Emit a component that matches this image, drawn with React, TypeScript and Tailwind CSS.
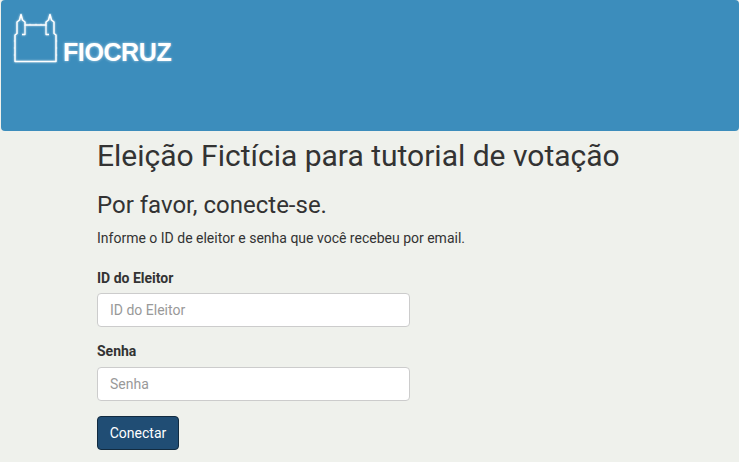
function FiocruzLogo() {
  return (
    <svg width="46" height="52" viewBox="0 0 46 52" fill="none" className="block">
      <g stroke="#fff" strokeLinejoin="round" className="[filter:drop-shadow(0_0_1px_rgba(255,255,255,0.7))]">
        <path
          d="M3 48.5V22L5 20.5V9L7.5 7L9 1.5L10.5 7L13 9V12H34V9L36.5 7L38 1.5L39.5 7L42 9V20.5L44 22V48.5Z"
          strokeWidth="1.5"
        />
        <path d="M13 12V21.5H10M34 12V21.5H37" strokeWidth="1.3" />
        <path d="M3 28H1.8M3 35H1.8M3 42H1.8M44 28H45.2M44 35H45.2M44 42H45.2M18 12V10.8M24 12V10.8M29 12V10.8" strokeWidth="1" opacity="0.7" />
      </g>
    </svg>
  );
}

export default function App() {
  return (
    <div className="min-h-[462px] overflow-hidden bg-[#eff1ec] font-['Roboto',sans-serif] text-[14px] text-[#333]">
      <header className="ml-px flex h-[131px] items-start rounded-[4px] bg-[#3c8dbc] pl-[11px] pt-[13px]">
        <FiocruzLogo />
        <span className="ml-[5px] mt-[25px] font-['Liberation_Sans',sans-serif] text-[25px] leading-[28px] font-bold tracking-[-0.4px] text-white [text-shadow:0_0_3px_rgba(255,255,255,0.6)]">
          FIOCRUZ
        </span>
      </header>
      <main className="pl-[97px]">
        <h1 className="mt-[8px] text-[30px] leading-[33px] font-normal">Eleição Fictícia para tutorial de votação</h1>
        <h2 className="mt-[20px] text-[24px] leading-[26px] font-normal">Por favor, conecte-se.</h2>
        <p className="mt-[10px] leading-[20px]">Informe o ID de eleitor e senha que você recebeu por email.</p>
        <form className="mt-[20px] w-[313px]">
          <label className="block leading-[20px] font-bold">ID do Eleitor</label>
          <input
            placeholder="ID do Eleitor"
            className="mt-[5px] block h-[34px] w-full rounded-[4px] border border-[#ccc] bg-white px-[12px] text-[14px] outline-none placeholder:text-[#999]"
          />
          <label className="mt-[14px] block leading-[20px] font-bold">Senha</label>
          <input
            placeholder="Senha"
            className="mt-[6px] block h-[34px] w-full rounded-[4px] border border-[#ccc] bg-white px-[12px] text-[14px] outline-none placeholder:text-[#999]"
          />
          <button
            type="button"
            className="mt-[15px] block h-[34px] w-[82px] rounded-[4px] border border-[#122b40] bg-[#204d74] text-[14px] text-white"
          >
            Conectar
          </button>
        </form>
      </main>
    </div>
  );
}
